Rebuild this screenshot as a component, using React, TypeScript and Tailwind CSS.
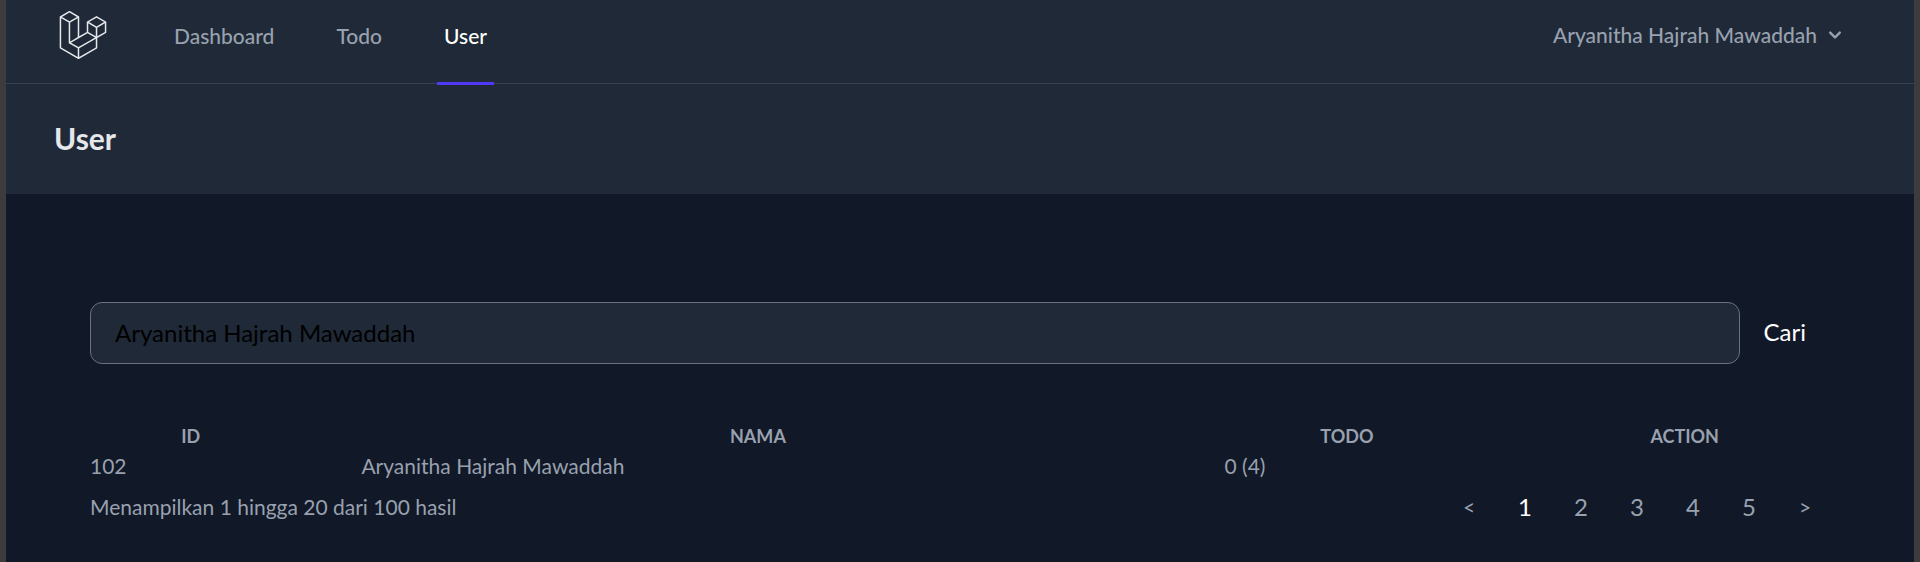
import { SiLaravel } from "react-icons/si";

const links = [
  { label: "Dashboard", active: false },
  { label: "Todo", active: false },
  { label: "User", active: true },
];

const pages = ["1", "2", "3", "4", "5"];

function NavBar() {
  return (
    <nav className="flex h-[84px] justify-between border-b border-gray-700 bg-[#1f2937] pl-[53px] pr-[67px]">
      <div className="flex">
        <a href="#" aria-label="Home" className="mr-[60px] pt-[11px] text-gray-200">
          <SiLaravel size={48} />
        </a>
        <div className="flex gap-[48px]">
          {links.map((link) => (
            <a
              key={link.label}
              href="#"
              className={
                link.active
                  ? "-mb-[2px] flex items-center border-b-[3px] border-indigo-600 px-[7px] pb-[10px] text-[21px] font-medium text-white"
                  : "-mb-[2px] flex items-center border-b-[3px] border-transparent px-[7px] pb-[10px] text-[21px] font-medium text-gray-400"
              }
            >
              {link.label}
            </a>
          ))}
        </div>
      </div>
      <button type="button" className="flex items-center gap-[6px] pb-[14px] text-[21px] font-medium text-gray-400">
        Aryanitha Hajrah Mawaddah
        <svg viewBox="0 0 20 20" fill="currentColor" className="size-[24px]" aria-hidden="true">
          <path
            fillRule="evenodd"
            clipRule="evenodd"
            d="M5.293 7.293a1 1 0 011.414 0L10 10.586l3.293-3.293a1 1 0 111.414 1.414l-4 4a1 1 0 01-1.414 0l-4-4a1 1 0 010-1.414z"
          />
        </svg>
      </button>
    </nav>
  );
}

function UserTable() {
  return (
    <table className="w-full table-fixed text-left text-[21px] leading-[30px] text-gray-400">
      <colgroup>
        <col className="w-[15.6%]" />
        <col className="w-[49.6%]" />
        <col className="w-[18.1%]" />
        <col className="w-[16.7%]" />
      </colgroup>
      <thead className="text-center text-[18px] uppercase">
        <tr>
          <th className="pr-[70px] font-bold">ID</th>
          <th className="pr-[70px] font-bold">Nama</th>
          <th className="pr-[70px] font-bold">Todo</th>
          <th className="font-bold">Action</th>
        </tr>
      </thead>
      <tbody>
        <tr>
          <td>102</td>
          <td>Aryanitha Hajrah Mawaddah</td>
          <td>0 (4)</td>
          <td></td>
        </tr>
      </tbody>
    </table>
  );
}

function Pagination() {
  return (
    <div className="mt-[8px] flex items-center justify-between text-gray-400">
      <p className="text-[21px] leading-[36px]">Menampilkan 1 hingga 20 dari 100 hasil</p>
      <nav aria-label="Pagination" className="-mr-[3px] flex items-center text-[24px] leading-[36px]">
        <a href="#" aria-label="Previous page" className="w-14 text-center text-[21px]">
          &lt;
        </a>
        {pages.map((page) => (
          <a
            key={page}
            href="#"
            className={page === "1" ? "w-14 text-center text-white" : "w-14 text-center"}
          >
            {page}
          </a>
        ))}
        <a href="#" aria-label="Next page" className="w-14 text-center text-[21px]">
          &gt;
        </a>
      </nav>
    </div>
  );
}

export default function App() {
  return (
    <div className="min-h-screen border-x-[6px] border-[#3c3c3c] bg-[#111827] font-[Lato,sans-serif]">
      <NavBar />
      <header className="flex h-[110px] items-center bg-[#1f2937] pb-[2px] pl-[48px]">
        <h1 className="text-[30px] font-bold leading-[36px] text-gray-200">User</h1>
      </header>
      <main className="px-[84px] pt-[108px]">
        <form className="flex items-center" onSubmit={(event) => event.preventDefault()}>
          <input
            type="text"
            aria-label="Cari user"
            defaultValue="Aryanitha Hajrah Mawaddah"
            className="h-[62px] min-w-0 flex-1 rounded-[12px] border border-gray-500 bg-[#1f2937] px-[24px] pb-[2px] text-[24px] text-black"
          />
          <button type="submit" className="px-[24px] pb-[2px] text-[24px] text-white">
            Cari
          </button>
        </form>
        <div className="mt-[57px]">
          <UserTable />
          <Pagination />
        </div>
      </main>
    </div>
  );
}
